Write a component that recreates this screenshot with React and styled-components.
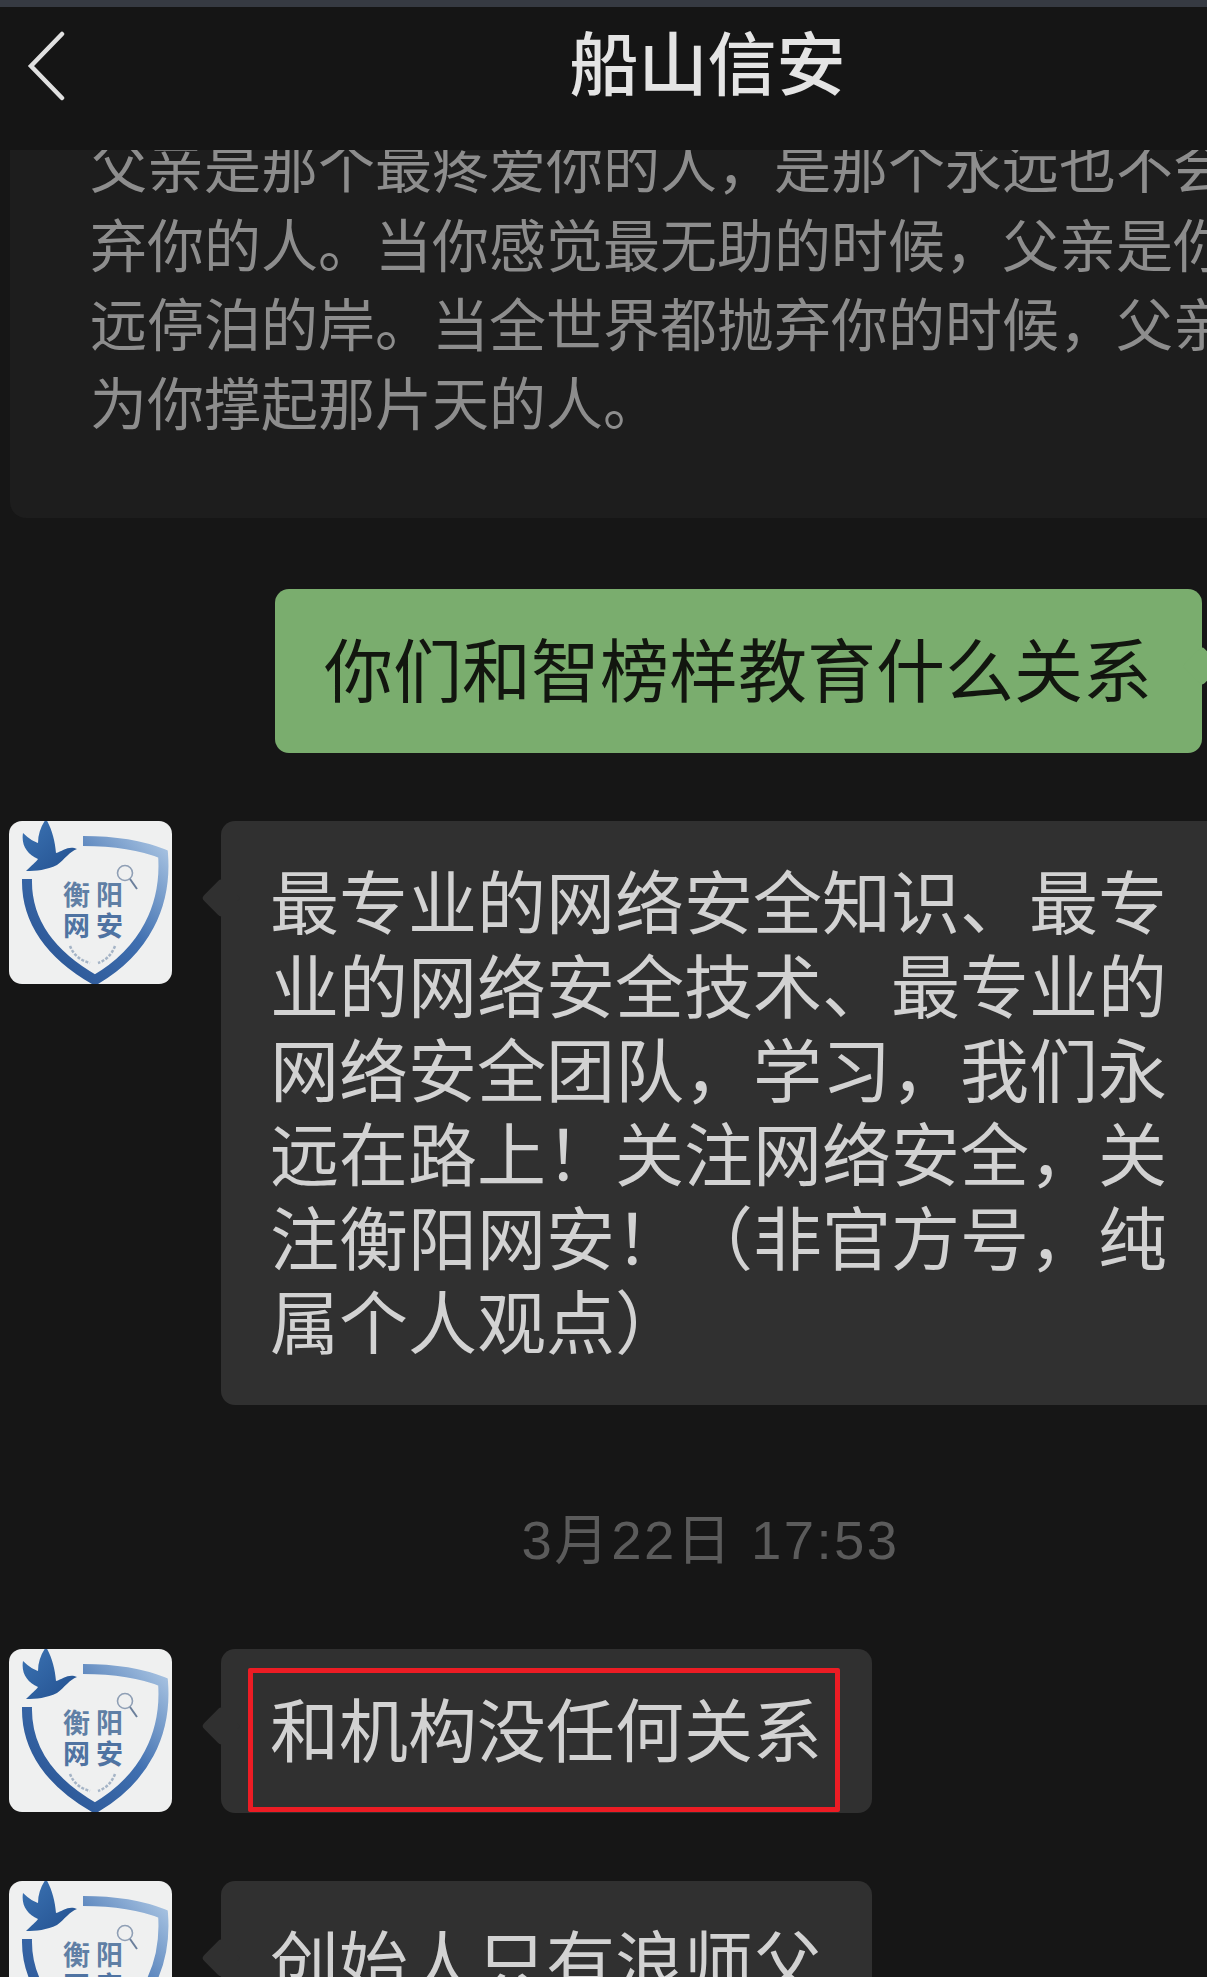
import React from 'react';
import styled, { createGlobalStyle } from 'styled-components';

const GlobalStyle = createGlobalStyle`
  html, body {
    margin: 0;
    padding: 0;
    background: #161616;
  }
`;

const Page = styled.div`
  width: 1207px;
  height: 1977px;
  display: flex;
  flex-direction: column;
  overflow: hidden;
  background: #161616;
  font-family: "Noto Sans CJK SC", "Noto Sans", sans-serif;
`;

const StatusStrip = styled.div`
  height: 7px;
  flex-shrink: 0;
  background: #363a42;
`;

const Header = styled.header`
  height: 143px;
  flex-shrink: 0;
  position: relative;
  z-index: 1;
  display: flex;
  align-items: flex-start;
  justify-content: center;
  background: #151515;
`;

const BackButton = styled.svg`
  position: absolute;
  left: 27px;
  top: 24px;
  width: 40px;
  height: 70px;
`;

const Title = styled.h1`
  margin: 12px 0 0 208px;
  font-size: 69px;
  line-height: 82px;
  font-weight: 500;
  color: #e4e4e4;
`;

const Thread = styled.main`
  flex: 1;
  min-height: 0;
  overflow: hidden;
  display: flex;
  flex-direction: column;
`;

const ArticleCard = styled.section`
  flex-shrink: 0;
  width: 1300px;
  margin: -100px 0 71px 10px;
  padding: 74px 0 78px 80px;
  box-sizing: border-box;
  border-radius: 16px;
  background: #1d1d1d;
  color: #8d8d8d;
  font-size: 57px;
  line-height: 79px;
`;

const Line = styled.div`
  white-space: nowrap;
`;

const Row = styled.div`
  flex-shrink: 0;
  display: flex;
  align-items: flex-start;
  gap: 49px;
  padding: 0 5px 0 9px;
  margin-bottom: 68px;
  justify-content: ${(p) => (p.$mine ? 'flex-end' : 'flex-start')};
`;

const Bubble = styled.div`
  position: relative;
  flex-shrink: 0;
  box-sizing: border-box;
  padding: 36px 50px 44px 49px;
  border-radius: 14px;
  font-size: 69px;
  line-height: 84px;
  background: ${(p) => (p.$mine ? '#7aad6e' : '#303030')};
  color: ${(p) => (p.$mine ? '#12160f' : '#d2d2d2')};

  &::before {
    content: '';
    position: absolute;
    top: 63px;
    width: 28px;
    height: 28px;
    border-radius: 4px;
    transform: rotate(45deg);
    background: inherit;
    ${(p) => (p.$mine ? 'right: -14px;' : 'left: -14px;')}
  }
`;

const RedMark = styled.div`
  position: absolute;
  left: 27px;
  top: 19px;
  right: 32px;
  bottom: 1px;
  border: 5px solid #ec1c24;
  border-radius: 2px;
`;

const TimeStamp = styled.div`
  flex-shrink: 0;
  margin: 34px 0 74px;
  text-align: center;
  padding-left: 214px;
  font-family: "Liberation Sans", "Noto Sans CJK SC", sans-serif;
  font-size: 54.5px;
  line-height: 68px;
  letter-spacing: 2.4px;
  color: #5b5b5b;
`;

const AvatarBox = styled.svg`
  flex-shrink: 0;
  width: 163px;
  height: 163px;
  display: block;
`;

const Avatar = () => (
  <AvatarBox viewBox="0 0 163 163">
    <defs>
      <linearGradient id="shieldBlue" x1="0" y1="1" x2="1" y2="0">
        <stop offset="0" stopColor="#26508f" />
        <stop offset="0.55" stopColor="#3f6fb0" />
        <stop offset="1" stopColor="#a9c4e2" />
      </linearGradient>
      <linearGradient id="birdBlue" x1="0" y1="0" x2="1" y2="1">
        <stop offset="0" stopColor="#3c74b4" />
        <stop offset="1" stopColor="#23508f" />
      </linearGradient>
      <clipPath id="avatarClip">
        <rect width="163" height="163" rx="13" />
      </clipPath>
    </defs>
    <g clipPath="url(#avatarClip)">
      <rect width="163" height="163" fill="#eff0f0" />
      <path
        d="M74 20 Q122 20 154 33 C158 84 136 130 86 159 C42 134 17 100 18 58"
        fill="none"
        stroke="url(#shieldBlue)"
        strokeWidth="10"
      />
      <path
        d="M37 -2 C43 8 46 20 47 32 C54 30 60 24 68 28 C60 31 56 38 48 44 C38 49 27 50 17 50 C22 45 27 41 29 38 C18 33 12 24 14 12 C20 18 26 21 29 22 C29 13 32 5 37 -2Z"
        fill="url(#birdBlue)"
      />
      <circle cx="116" cy="52" r="7.5" fill="none" stroke="#8f9fb5" strokeWidth="1.6" />
      <path d="M121 58 L128 68" stroke="#6b7f9b" strokeWidth="2" />
      <text x="54" y="84" fontSize="27" fontWeight="700" fill="#5f7fa5" fontFamily="Noto Sans CJK SC, sans-serif" letterSpacing="6">衡阳</text>
      <text x="54" y="115" fontSize="27" fontWeight="700" fill="#4f73a2" fontFamily="Noto Sans CJK SC, sans-serif" letterSpacing="6">网安</text>
      <path d="M61 125 Q66 138 81 142 M106 125 Q101 138 89 142" fill="none" stroke="#a5b4c6" strokeWidth="2.5" strokeDasharray="3 1.5" />
    </g>
  </AvatarBox>
);

const articleLines = [
  '父亲是那个最疼爱你的人，是那个永远也不会抛',
  '弃你的人。当你感觉最无助的时候，父亲是你永',
  '远停泊的岸。当全世界都抛弃你的时候，父亲是',
  '为你撑起那片天的人。',
];

const replyLines = [
  '最专业的网络安全知识、最专',
  '业的网络安全技术、最专业的',
  '网络安全团队，学习，我们永',
  '远在路上！关注网络安全，关',
  '注衡阳网安！（非官方号，纯',
  '属个人观点）',
];

export default function App() {
  return (
    <Page>
      <GlobalStyle />
      <StatusStrip />
      <Header>
        <BackButton viewBox="0 0 40 70" fill="none" stroke="#e0e0e0" strokeWidth="4.5" strokeLinecap="round">
          <path d="M35 3 L4 35 L35 67" />
        </BackButton>
        <Title>船山信安</Title>
      </Header>
      <Thread>
        <ArticleCard>
          {articleLines.map((line) => (
            <Line key={line}>{line}</Line>
          ))}
        </ArticleCard>
        <Row $mine>
          <Bubble $mine>
            <Line>你们和智榜样教育什么关系</Line>
          </Bubble>
        </Row>
        <Row>
          <Avatar />
          <Bubble style={{ width: 1000 }}>
            {replyLines.map((line) => (
              <Line key={line}>{line}</Line>
            ))}
          </Bubble>
        </Row>
        <TimeStamp>3月22日 17:53</TimeStamp>
        <Row>
          <Avatar />
          <Bubble>
            <Line>和机构没任何关系</Line>
            <RedMark />
          </Bubble>
        </Row>
        <Row>
          <Avatar />
          <Bubble>
            <Line>创始人只有浪师父</Line>
          </Bubble>
        </Row>
      </Thread>
    </Page>
  );
}
